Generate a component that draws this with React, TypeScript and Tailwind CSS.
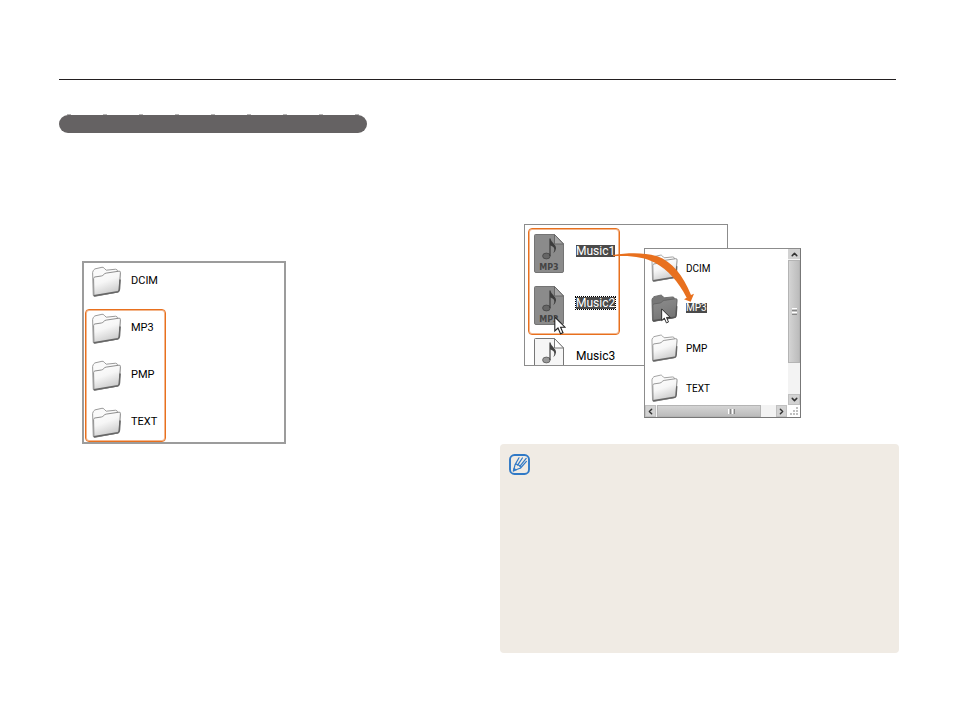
import { ChevronDown, ChevronLeft, ChevronRight, ChevronUp } from "lucide-react";

const ticks = [1, 2, 3, 4, 5, 6, 7, 8, 9];

function Folder({ dark, className }: { dark?: boolean; className: string }) {
  const id = dark ? "folder-dark" : "folder-light";
  return (
    <svg viewBox="0 0 92 96" className={className} aria-hidden="true">
      <defs>
        <linearGradient id={id} x1="0" y1="0" x2="0.4" y2="1">
          <stop offset="0" stopColor={dark ? "#8c8c8c" : "#ffffff"} />
          <stop offset="0.5" stopColor={dark ? "#828282" : "#f6f6f6"} />
          <stop offset="1" stopColor={dark ? "#747474" : "#cccccc"} />
        </linearGradient>
      </defs>
      <path
        d="M3 20 Q4 13 10 9 L32 4 Q36 3 39 7 L45 13 L74 10 Q79 10 80 15 L80 22 L88 22 L84 80 L9 94 Q5 94 5 90 Z"
        fill={dark ? "#777777" : "#fafafa"}
        stroke={dark ? "#666666" : "#969696"}
        strokeWidth="3"
      />
      <path
        d="M6 39 Q6 35 10 34 L30 31 Q35 30 38 26 Q40 23 45 22 L85 16 Q90 16 89 21 L85 76 Q85 80 80 81 L10 93 Q7 94 7 90 Z"
        fill={`url(#${id})`}
        stroke={dark ? "#626262" : "#8a8a8a"}
        strokeWidth="3"
      />
      <path
        d="M7 92 L81 80 Q85 79 86 72 L88 42"
        fill="none"
        stroke={dark ? "#555555" : "#666666"}
        strokeWidth="5"
      />
    </svg>
  );
}

function MusicFile({ light }: { light?: boolean }) {
  return (
    <svg viewBox="0 0 30 39" className="h-[39px] w-[30px] shrink-0" aria-hidden="true">
      <path
        d="M1.5 0.5 H20.5 L29.5 10 V37 Q29.5 38.5 28 38.5 H2 Q0.5 38.5 0.5 37 V1.5 Q0.5 0.5 1.5 0.5 Z"
        fill={light ? "#f6f6f6" : "#8b8b8b"}
        stroke={light ? "#777777" : "#747474"}
      />
      <path
        d="M20.5 0.5 V10 H29.5 Z"
        fill={light ? "#ffffff" : "#a6a6a6"}
        stroke={light ? "#777777" : "#666666"}
      />
      <ellipse
        cx="12.4"
        cy="22"
        rx="3.8"
        ry="2.9"
        fill={light ? "#999999" : "#666666"}
        stroke={light ? "#555555" : "#444444"}
        strokeWidth="0.8"
      />
      <path
        d="M15.4 22 V4.5 H16.6 C17 8.5 22.4 10.5 22 14.5 Q21.8 17 19.4 19.2 Q21 15.6 20 13.8 Q18.8 12 16.6 11.4 V22 Z"
        fill={light ? "#444444" : "#3c3c3c"}
      />
      {!light && (
        <text
          x="15"
          y="36"
          textAnchor="middle"
          fontFamily="DejaVu Sans, sans-serif"
          fontSize="8"
          fontWeight="700"
          fill="#444444"
        >
          MP3
        </text>
      )}
    </svg>
  );
}

function Cursor({ className }: { className: string }) {
  return (
    <svg viewBox="0 0 12 19" className={className} aria-hidden="true">
      <path
        d="M0.8 1 V15 L4 12 L6.5 17.8 L9 16.7 L6.6 11.2 H11 Z"
        fill="#ffffff"
        stroke="#222222"
        strokeWidth="1.1"
      />
    </svg>
  );
}

function FolderRow({ name }: { name: string }) {
  return (
    <li className="flex h-[31px] items-center gap-[9px]">
      <Folder className="h-[31px] w-[31px] shrink-0" />
      <span className="text-[11px]">{name}</span>
    </li>
  );
}

function SmallFolderRow({ name, selected }: { name: string; selected?: boolean }) {
  return (
    <li className="flex h-[28px] items-center gap-2">
      <div className="relative">
        <Folder dark={selected} className="h-[28px] w-[27px]" />
        {selected && <Cursor className="absolute top-[14px] left-[10px] h-4 w-[10px]" />}
      </div>
      <span className={selected ? "bg-[#4a4a4a] text-[10px] leading-[10px] text-white" : "text-[10px]"}>
        {name}
      </span>
    </li>
  );
}

function DeviceWindow() {
  return (
    <div className="ml-[23px] h-[183px] w-[204px] border-2 border-[#9c9c9c] bg-white pt-[3px]">
      <ul className="pl-[7px]">
        <FolderRow name="DCIM" />
      </ul>
      <ul className="mt-3 ml-px flex w-[81px] flex-col gap-4 rounded-[4px] border border-[#e8701e] py-[3px] pl-[5px] ring-1 ring-[#e8701e]/50 ring-inset">
        <FolderRow name="MP3" />
        <FolderRow name="PMP" />
        <FolderRow name="TEXT" />
      </ul>
    </div>
  );
}

function MusicWindow() {
  return (
    <div className="h-[142px] w-[204px] overflow-hidden border border-[#8c8c8c] bg-white pt-[3px] pl-[3px] text-[12px] leading-[14px]">
      <ul className="flex w-[92px] flex-col gap-[13px] rounded-[4px] border border-[#e8701e] pt-[5px] pb-[9px] pl-[5px] ring-1 ring-[#e8701e]/50 ring-inset">
        <li className="flex gap-3">
          <MusicFile />
          <span className="mt-[11px] h-3 bg-[#4a4a4a] leading-3 text-white">Music1</span>
        </li>
        <li className="flex gap-3">
          <div className="relative">
            <MusicFile />
            <Cursor className="absolute top-[30px] left-5 h-[19px] w-3" />
          </div>
          <span className="mt-[11px] h-3 bg-[#4a4a4a] leading-3 text-white outline outline-dotted outline-black">
            Music2
          </span>
        </li>
      </ul>
      <div className="mt-[3px] flex gap-3 pl-[6px]">
        <MusicFile light />
        <span className="mt-[11px]">Music3</span>
      </div>
    </div>
  );
}

function FolderWindow() {
  return (
    <div className="flex h-[170px] w-[157px] flex-col border border-[#8c8c8c] border-r-[#777777] border-b-[#777777] bg-white">
      <div className="flex min-h-0 flex-1">
        <ul className="flex flex-1 flex-col gap-3 overflow-hidden pt-[5px] pl-[6px]">
          <SmallFolderRow name="DCIM" />
          <SmallFolderRow name="MP3" selected />
          <SmallFolderRow name="PMP" />
          <SmallFolderRow name="TEXT" />
        </ul>
        <div className="flex w-3 flex-col bg-[#f3f3f3]">
          <button aria-label="Scroll up" className="flex h-[10px] items-center justify-center bg-[#d2d2d2]">
            <ChevronUp size={9} strokeWidth={4} color="#333333" />
          </button>
          <div className="mt-px flex h-[103px] flex-col items-center justify-center gap-px border border-[#b4b4b4] bg-gradient-to-r from-[#d4d4d4] to-[#bcbcbc]">
            <span className="h-px w-[5px] bg-white" />
            <span className="h-px w-[5px] bg-[#888888]" />
            <span className="h-px w-[5px] bg-white" />
            <span className="h-px w-[5px] bg-[#888888]" />
          </div>
          <button
            aria-label="Scroll down"
            className="mt-auto flex h-[11px] items-center justify-center border border-[#c0c0c0] bg-[#d2d2d2]"
          >
            <ChevronDown size={9} strokeWidth={4} color="#333333" className="shrink-0" />
          </button>
        </div>
      </div>
      <div className="flex h-3 bg-[#f3f3f3]">
        <button
          aria-label="Scroll left"
          className="flex w-[11px] items-center justify-center border border-[#c0c0c0] bg-[#d2d2d2]"
        >
          <ChevronLeft size={9} strokeWidth={4} color="#333333" className="shrink-0" />
        </button>
        <div className="ml-px flex w-[104px] items-center gap-px border border-[#b4b4b4] bg-gradient-to-b from-[#d4d4d4] to-[#bcbcbc] pl-[70px]">
          <span className="h-[5px] w-px bg-white" />
          <span className="h-[5px] w-px bg-[#888888]" />
          <span className="h-[5px] w-px bg-white" />
          <span className="h-[5px] w-px bg-[#888888]" />
        </div>
        <button
          aria-label="Scroll right"
          className="ml-auto flex w-[11px] items-center justify-center border border-[#c0c0c0] bg-[#d2d2d2]"
        >
          <ChevronRight size={9} strokeWidth={4} color="#333333" className="shrink-0" />
        </button>
        <svg viewBox="0 0 13 12" className="h-3 w-[13px] bg-white" aria-hidden="true">
          <path
            d="M9 2h2v2h-2z M6 5h2v2h-2z M9 5h2v2h-2z M3 8h2v2h-2z M6 8h2v2h-2z M9 8h2v2h-2z"
            fill="#c0c0c0"
          />
        </svg>
      </div>
    </div>
  );
}

function DragArrow() {
  return (
    <svg viewBox="10 90 246 156" className="absolute top-[26px] left-[89px] h-[52px] w-[82px]" aria-hidden="true">
      <path
        d="M10 105 C60 97 108 98 143 109 C186 124 220 166 244 225 L253 221 L243 245 L223 238 L231 233 C206 184 176 150 136 128 C104 111 60 105 10 109 Z"
        fill="#e8701e"
      />
    </svg>
  );
}

function NoteIcon() {
  return (
    <svg
      viewBox="0 0 21 21"
      className="h-[21px] w-[21px]"
      fill="none"
      stroke="#3079c6"
      strokeLinejoin="round"
      strokeLinecap="round"
      aria-hidden="true"
    >
      <rect x="1" y="1" width="19" height="19" rx="4.5" strokeWidth="1.9" />
      <path
        d="M4.5 16.8 L6 10.8 L10 3.8 M6 10.8 Q7.6 9.4 8.6 11.2 Q10.6 10.6 10.8 12.4 Q12.4 12.6 11.6 14 L4.5 16.8 M8.6 11.2 L13.4 4 M10.8 12.4 L17.2 4.4 M11.6 14 L17.4 7.4"
        strokeWidth="1.2"
      />
      <path d="M4.2 17 L5 13.9 L7.2 15.8 Z" fill="#3079c6" strokeWidth="0.6" />
    </svg>
  );
}

export default function App() {
  return (
    <main className="min-h-screen bg-white pt-[79px] pr-[55px] pb-16 pl-[59px] font-[Roboto,sans-serif] text-black">
      <hr className="mr-[3px] border-t border-[#231f20]" />

      <div className="grid grid-cols-2 gap-[42px]">
        {/* Left column */}
        <section>
          <div className="mt-[34px] w-[308px]">
            <div className="flex justify-between px-2">
              {ticks.map((tick) => (
                <span key={tick} className="h-px w-1 bg-[#b5b4b4]" />
              ))}
            </div>
            <div className="h-[18px] rounded-full bg-[#656263]" />
          </div>
          <div className="mt-32">
            <DeviceWindow />
          </div>
        </section>

        {/* Right column */}
        <section className="pt-36">
          {/* Dragging files from one window to the other */}
          <div className="relative ml-6 h-[194px]">
            <MusicWindow />
            <div className="absolute top-6 left-[120px]">
              <FolderWindow />
            </div>
            <DragArrow />
          </div>

          <aside className="mt-[26px] min-h-[209px] rounded-[4px] bg-[#f0ebe4] px-[9px] py-[10px]">
            <NoteIcon />
          </aside>
        </section>
      </div>
    </main>
  );
}
